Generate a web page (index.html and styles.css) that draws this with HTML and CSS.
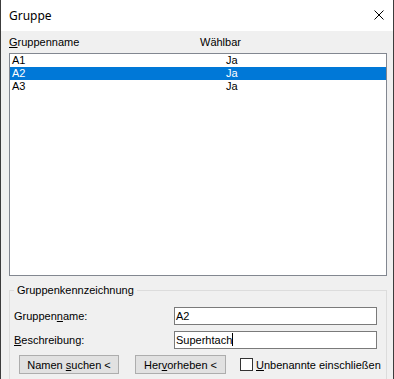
FILE: index.html
```html
<!DOCTYPE html>
<html lang="de">
<head>
    <meta charset="UTF-8">
    <title>Gruppe</title>
    <link rel="stylesheet" href="styles.css">
</head>
<body>
    <div class="window">
        <div class="titlebar">
            <span class="title">Gruppe</span>
            <svg class="close" width="10" height="10" viewBox="0 0 10 10">
                <path d="M0.5 0.5 L9.5 9.5 M9.5 0.5 L0.5 9.5" stroke="#000" stroke-width="1" fill="none"/>
            </svg>
        </div>

        <div class="content">
            <div class="list-header">
                <span><u>G</u>ruppenname</span>
                <span>Wählbar</span>
            </div>

            <div class="listbox">
                <div class="row"><span>A1</span><span>Ja</span></div>
                <div class="row selected"><span>A2</span><span>Ja</span></div>
                <div class="row"><span>A3</span><span>Ja</span></div>
            </div>

            <fieldset class="groupbox">
                <legend>Gruppenkennzeichnung</legend>
                <div class="form-row">
                    <label>Gruppen<u>n</u>ame:</label>
                    <div class="textbox">A2</div>
                </div>
                <div class="form-row">
                    <label><u>B</u>eschreibung:</label>
                    <div class="textbox">Superhtach<span class="caret"></span></div>
                </div>
                <div class="button-row">
                    <button class="btn btn-search">Namen <u>s</u>uchen &lt;</button>
                    <button class="btn btn-highlight">Her<u>v</u>orheben &lt;</button>
                    <span class="checkbox"></span>
                    <span class="check-label"><u>U</u>nbenannte einschließen</span>
                </div>
            </fieldset>
        </div>
    </div>
</body>
</html>
```

FILE: styles.css
```css
* {
    margin: 0;
    padding: 0;
    box-sizing: border-box;
}

body {
    width: 394px;
    height: 379px;
    overflow: hidden;
    background: #f0f0f0;
    font-family: 'Liberation Sans', Arial, sans-serif;
    font-size: 11px;
    color: #000;
}

u {
    text-decoration-thickness: 1px;
    text-underline-offset: 1px;
}

.window {
    width: 394px;
    height: 379px;
    overflow: hidden;
    display: flex;
    flex-direction: column;
    border-left: 1px solid #3c3c3c;
    border-right: 1px solid #3c3c3c;
    background: #f0f0f0;
}

.titlebar {
    flex-shrink: 0;
    height: 31px;
    background: #fff;
    display: flex;
    align-items: center;
    justify-content: space-between;
    padding: 0 9px 1px 8px;
}

.title {
    font-family: 'Noto Sans', sans-serif;
    font-size: 12px;
}

.content {
    flex-shrink: 0;
    padding: 0 6px 0 8px;
}

.list-header {
    height: 22px;
    display: grid;
    grid-template-columns: 191px auto;
    align-items: center;
    padding: 0 0 1px 0;
}

.listbox {
    height: 223px;
    background: #fff;
    border: 1px solid #828790;
}

.row {
    height: 13px;
    line-height: 13px;
    display: grid;
    grid-template-columns: 214px auto;
    padding-left: 2px;
}

.row.selected {
    background: #0078d7;
    color: #fff;
}

.groupbox {
    margin-top: 8px;
    border: 1px solid #dcdcdc;
    padding: 0 4px 10px 4px;
    height: 120px;
}

.groupbox legend {
    padding: 0 3px;
    line-height: 13px;
}

.form-row {
    display: grid;
    grid-template-columns: 160px 203px;
    align-items: center;
    margin-top: 6px;
}

.form-row:first-of-type {
    margin-top: 10px;
}

.textbox {
    height: 18px;
    line-height: 16px;
    border: 1px solid #7a7a7a;
    background: #fff;
    padding-left: 1px;
}

.caret {
    display: inline-block;
    width: 1px;
    height: 13px;
    background: #000;
    vertical-align: -2px;
}

.button-row {
    display: flex;
    align-items: center;
    margin-top: 6px;
    padding-left: 5px;
}

.btn {
    height: 19px;
    background: #e1e1e1;
    border: 1px solid #adadad;
    font-family: inherit;
    font-size: 11px;
    color: #000;
}

.btn-search {
    width: 100px;
}

.btn-highlight {
    width: 91px;
    margin-left: 16px;
}

.checkbox {
    width: 13px;
    height: 13px;
    border: 1px solid #333;
    background: #fff;
    margin-left: 14px;
}

.check-label {
    margin-left: 3px;
}
```
